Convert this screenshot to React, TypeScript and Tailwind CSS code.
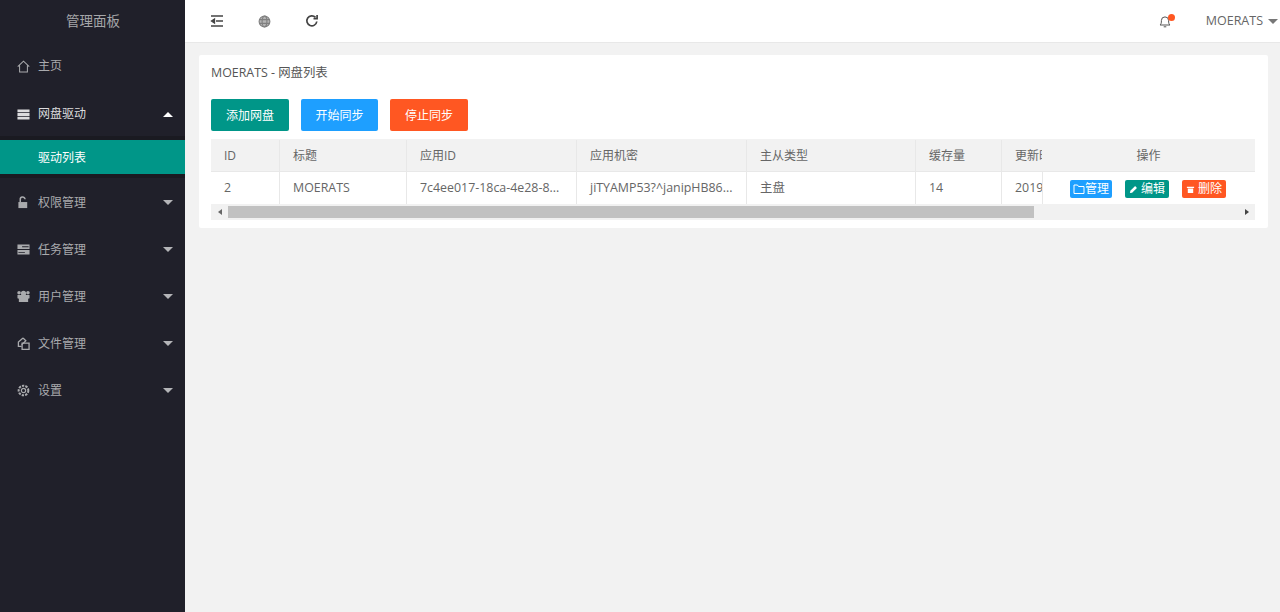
import React from 'react';

type IconProps = { className?: string };

const Caret: React.FC<{ up?: boolean; className?: string }> = ({ up, className = '' }) => (
  <span
    className={`w-0 h-0 border-x-[5.5px] border-x-transparent ${up ? 'border-b-[5px] border-b-white' : 'border-t-[5px] border-t-[#b4b5b8]'} ${className}`}
  />
);

const HomeIcon: React.FC<IconProps> = ({ className }) => (
  <svg viewBox="0 0 14 14" className={className} fill="none" stroke="currentColor" strokeWidth="1.1">
    <path d="M.8 7.200 7 1.200l6.200 6M2.800 5.800v7h8.400v-7" />
  </svg>
);
const ListIcon: React.FC<IconProps> = ({ className }) => (
  <svg viewBox="0 0 14 14" className={className} fill="currentColor">
    <path d="M.5 1.500h13v3H.5zM.5 5.500h13v3H.5zM.5 9.500h13v3H.5z" />
  </svg>
);
const LockIcon: React.FC<IconProps> = ({ className }) => (
  <svg viewBox="0 0 14 14" className={className} fill="currentColor">
    <path d="M1.500 6.500h9.500v6.500H1.500z" />
    <path d="M3.500 6.500V4a2.600 2.600 0 0 1 5.200-.5" fill="none" stroke="currentColor" strokeWidth="1.600" />
  </svg>
);
const ServerIcon: React.FC<IconProps> = ({ className }) => (
  <svg viewBox="0 0 14 14" className={className} fill="currentColor">
    <path d="M.5 1.500h13v5H.5zM.5 7.500h13v5H.5z" />
    <path d="M5.500 3.600h7v.9h-7zM1.500 9.600h7v.9h-7z" fill="#20202a" />
  </svg>
);
const UsersIcon: React.FC<IconProps> = ({ className }) => (
  <svg viewBox="0 0 14 14" className={className} fill="currentColor">
    <circle cx="7" cy="3.500" r="2.800" />
    <circle cx="2.200" cy="3" r="1.900" />
    <circle cx="11.800" cy="3" r="1.900" />
    <path d="M.5 5.500h13v3.500l-1.500.5v3.500H2V9.500L.5 9z" />
  </svg>
);
const AppsIcon: React.FC<IconProps> = ({ className }) => (
  <svg viewBox="0 0 14 14" className={className} fill="none" stroke="currentColor" strokeWidth="1.400">
    <path d="M6.500 1 1.500 5.500v4.500h3.500M6.500 1 9.500 4 5 8.500" />
    <path d="M5.500 6.500h7.500v6.800H5.500z" />
  </svg>
);
const GearIcon: React.FC<IconProps> = ({ className }) => (
  <svg viewBox="0 0 14 14" className={className} fill="none" stroke="currentColor">
    <circle cx="7" cy="7" r="2.300" strokeWidth="1.300" />
    <circle cx="7" cy="7" r="5.200" strokeWidth="2.200" strokeDasharray="2.500 1.200" />
  </svg>
);

const navItems = [
  { label: '权限管理', icon: LockIcon },
  { label: '任务管理', icon: ServerIcon },
  { label: '用户管理', icon: UsersIcon },
  { label: '文件管理', icon: AppsIcon },
  { label: '设置', icon: GearIcon },
];

const cellClass = 'shrink-0 h-full flex items-center pl-[13px] border-r border-[#e8e8e8] whitespace-nowrap overflow-hidden';

const columns = [
  { w: 'w-[69px]', title: 'ID', value: '2' },
  { w: 'w-[127px]', title: '标题', value: 'MOERATS' },
  { w: 'w-[170px]', title: '应用ID', value: '7c4ee017-18ca-4e28-8...' },
  { w: 'w-[170px]', title: '应用机密', value: 'jiTYAMP53?^janipHB86...' },
  { w: 'w-[169px]', title: '主从类型', value: '主盘' },
  { w: 'w-[86px]', title: '缓存量', value: '14' },
  { w: 'w-[160px]', title: '更新时间', value: '2019-08-12 10:20:31' },
];

const App: React.FC = () => {
  return (
    <div className="flex w-[1280px] h-[612px] overflow-hidden bg-[#f2f2f2] text-[12px] text-[#666] font-['Open_Sans','Noto_Sans_CJK_SC',sans-serif]">
      {/* Sidebar */}
      <aside className="w-[185px] shrink-0 bg-[#20202a] text-[#a9aaad]">
        <div className="h-[42px] flex items-center pl-[66px] text-[13.5px] text-[#a5a6a9]">管理面板</div>
        <div className="h-[48px] flex items-center pl-[17px]">
          <HomeIcon className="w-[13px] h-[13px] mr-[8px]" />
          <span>主页</span>
        </div>
        <div className="h-[46px] flex items-center pl-[17px] pr-[12px] pt-[2px] text-[#dcdcde]">
          <ListIcon className="w-[13px] h-[13px] mr-[8px]" />
          <span className="flex-1">网盘驱动</span>
          <Caret up />
        </div>
        <div className="bg-[#1a1a21] py-[4px]">
          <div className="h-[34px] flex items-center pl-[38px] pt-[1px] bg-[#009688] text-white">驱动列表</div>
        </div>
        {navItems.map((item) => (
          <div key={item.label} className="h-[47px] flex items-center pl-[17px] pr-[12px] pt-[2px]">
            <item.icon className="w-[13px] h-[13px] mr-[8px]" />
            <span className="flex-1">{item.label}</span>
            <Caret />
          </div>
        ))}
      </aside>

      <div className="flex-1 min-w-0 flex flex-col">
        {/* Header */}
        <header className="h-[43px] shrink-0 bg-white border-b border-[#e8e8e8] flex items-center text-[#666]">
          <svg viewBox="0 0 14 14" className="w-[14px] h-[14px] ml-[25px] text-[#444]" fill="none" stroke="currentColor" strokeWidth="1.300">
            <path d="M1 2h12M6 7h7M1 12h12" />
            <path d="M4.500 5 1.500 7l3 2z" fill="currentColor" />
          </svg>
          <svg viewBox="0 0 14 14" className="w-[13px] h-[13px] ml-[34px] text-[#808080]" fill="#b5b5b5" stroke="currentColor" strokeWidth="1.200">
            <circle cx="7" cy="7" r="5.800" />
            <ellipse cx="7" cy="7" rx="2.600" ry="5.800" />
            <path d="M1.500 5h11M1.500 9h11" />
          </svg>
          <svg viewBox="0 0 14 14" className="w-[14px] h-[14px] ml-[34px] text-[#444]" fill="none" stroke="currentColor" strokeWidth="1.700">
            <path d="M11.800 7.500A5 5 0 1 1 10.500 3.400" />
            <path d="M8.500 4.600h3.600V1" />
          </svg>
          <div className="relative ml-auto mr-[34px]">
            <svg viewBox="0 0 14 14" className="w-[14px] h-[14px] text-[#555]" fill="none" stroke="currentColor" strokeWidth="1">
              <path d="M2 11c1.200-1 1.400-2 1.400-4.500a3.600 3.600 0 0 1 7.200 0c0 2.500.2 3.500 1.400 4.500zM5.700 12.800h2.600" />
            </svg>
            <span className="absolute top-0 -right-[3px] w-[7px] h-[7px] rounded-full bg-[#ff5722]" />
          </div>
          <span className="text-[12.5px] text-[#666]">MOERATS</span>
          <span className="ml-[5px] mr-[2px] w-0 h-0 border-x-[5px] border-x-transparent border-t-[5px] border-t-[#777]" />
        </header>

        {/* Content */}
        <main className="flex-1 pt-[12px] pl-[14px] pr-[12px]">
          <div className="bg-white rounded-[2px] px-[12px] pb-[8px]">
            <div className="h-[44px] flex items-center pb-[8px] text-[12.4px] text-[#555]">MOERATS - 网盘列表</div>
            <div className="flex gap-[12px] mb-[8px]">
              <button className="w-[78px] h-[32px] pt-[1px] rounded-[2px] bg-[#009688] text-white">添加网盘</button>
              <button className="w-[77px] h-[32px] pt-[1px] rounded-[2px] bg-[#1e9fff] text-white">开始同步</button>
              <button className="w-[78px] h-[32px] pt-[1px] rounded-[2px] bg-[#ff5722] text-white">停止同步</button>
            </div>

            <div className="w-[1044px] bg-[#f2f2f2]">
              <div className="flex">
                <div className="flex-1 min-w-0 overflow-hidden">
                  <div className="flex h-[33px] pt-[1px] bg-[#f2f2f2] border-b border-[#e8e8e8]">
                    {columns.map((c) => (
                      <div key={c.title} className={`${c.w} ${cellClass}`}>{c.title}</div>
                    ))}
                  </div>
                  <div className="flex h-[32px] bg-white text-[12.4px]">
                    {columns.map((c) => (
                      <div key={c.title} className={`${c.w} ${cellClass}`}>{c.value}</div>
                    ))}
                  </div>
                </div>
                <div className="w-[213px] shrink-0">
                  <div className="h-[33px] pt-[1px] flex items-center justify-center bg-[#f2f2f2] border-b border-[#e8e8e8]">操作</div>
                  <div className="h-[32px] flex items-center gap-[13px] pl-[27px] pt-[2px] bg-white border-l border-[#e8e8e8]">
                    <span className="w-[42px] h-[18px] flex items-center justify-center rounded-[2px] bg-[#1e9fff] text-white">
                      <svg viewBox="0 0 12 12" className="w-[12px] h-[12px] shrink-0" fill="none" stroke="currentColor">
                        <path d="M1 2h3.500l1 1.500h5.500v7h-10z" />
                      </svg>
                      管理
                    </span>
                    <span className="w-[44px] h-[18px] flex items-center justify-center gap-[3px] rounded-[2px] bg-[#009688] text-white">
                      <svg viewBox="0 0 10 10" className="w-[9px] h-[9px] shrink-0" fill="currentColor">
                        <path d="M1 9l.5-2.500L6.800 1.200l2 2L3.500 8.500z" />
                      </svg>
                      编辑
                    </span>
                    <span className="w-[44px] h-[18px] flex items-center justify-center gap-[3px] rounded-[2px] bg-[#ff5722] text-white">
                      <svg viewBox="0 0 10 10" className="w-[9px] h-[9px] shrink-0" fill="currentColor">
                        <path d="M1 2h8v1.200H1zM2 4h6v5H2z" />
                      </svg>
                      删除
                    </span>
                  </div>
                </div>
              </div>
              {/* Scrollbar */}
              <div className="h-[16px] flex items-center bg-[#f1f1f1]">
                <span className="w-[17px] flex justify-center">
                  <span className="w-0 h-0 border-y-[3.5px] border-y-transparent border-r-[4px] border-r-[#666]" />
                </span>
                <span className="w-[806px] h-[12px] bg-[#c1c1c1]" />
                <span className="ml-auto w-[17px] flex justify-center">
                  <span className="w-0 h-0 border-y-[3.5px] border-y-transparent border-l-[4px] border-l-[#444]" />
                </span>
              </div>
            </div>
          </div>
        </main>
      </div>
    </div>
  );
};

export default App;
